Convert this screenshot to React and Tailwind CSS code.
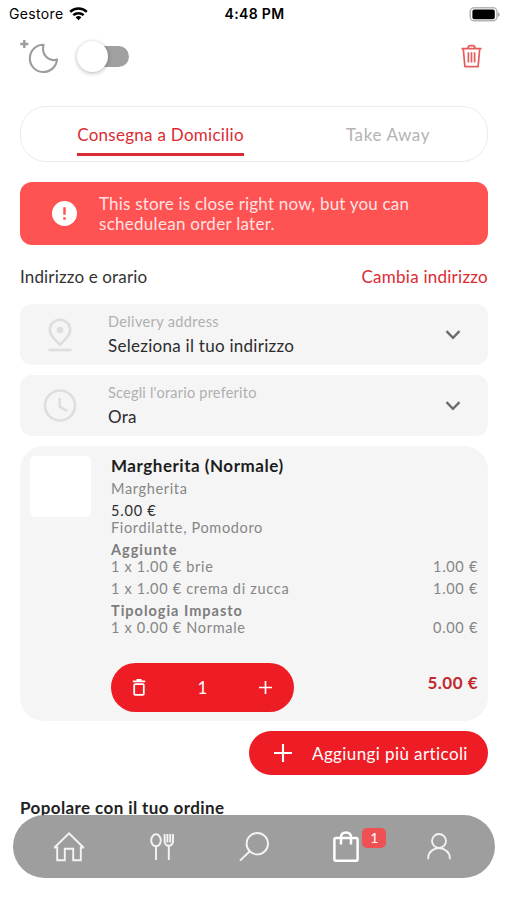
import { useState } from "react";

const EXTRAS = [
  {
    title: "Aggiunte",
    rows: [
      { label: "1 x 1.00 € brie", price: "1.00 €" },
      { label: "1 x 1.00 € crema di zucca", price: "1.00 €" },
    ],
  },
  {
    title: "Tipologia Impasto",
    rows: [{ label: "1 x 0.00 € Normale", price: "0.00 €" }],
  },
];

function StatusBar() {
  return (
    <div className="grid h-7 grid-cols-3 items-center pl-[9px] pr-[7px] font-['Inter',sans-serif] text-black">
      <div className="flex items-center gap-[5px]">
        <span className="text-[14px] leading-none tracking-[0.35px]">Gestore</span>
        <svg width="19" height="14" viewBox="0 0 19 14" fill="none" stroke="#000" strokeWidth="2.5">
          <path d="M1.2 4.9a12 12 0 0 1 16.6 0" />
          <path d="M4.3 8.2a7.6 7.6 0 0 1 10.4 0" />
          <path d="M9.5 13.2 6.6 10.3a4.2 4.2 0 0 1 5.8 0z" fill="#000" stroke="none" />
        </svg>
      </div>
      <span className="text-center text-[14px] font-semibold leading-none tracking-[0.35px]">4:48 PM</span>
      <svg className="justify-self-end" width="31" height="15" viewBox="0 0 31 15">
        <rect x="1.2" y="0.8" width="26.8" height="13" rx="4" fill="#fff" stroke="#b5b5b5" strokeWidth="1.5" />
        <rect x="3.4" y="2.4" width="22.4" height="9.8" rx="2" fill="#000" />
        <path d="M29 5.2c2.2.9 2.2 3.7 0 4.6z" fill="#a5a5a5" />
      </svg>
    </div>
  );
}

function Toolbar() {
  return (
    <div className="flex h-[56px] items-center justify-between pl-5 pr-[25px]">
      <div className="flex items-center gap-[18px]">
        <svg width="39" height="36" viewBox="0 0 39 36" fill="none" stroke="#9c9c9c">
          <path d="M4.3 2v8M.3 6h8" strokeWidth="2.4" />
          <path
            d="M23.6 6.800A13.600 13.600 0 1 0 37 21.400C28.500 24.300 20.800 16 23.600 6.800z"
            strokeWidth="2.1"
            strokeLinejoin="round"
          />
        </svg>
        <button className="flex h-[31px] w-[52px] items-center justify-end">
          <span className="flex h-[21px] w-[46px] items-center rounded-full bg-[#a0a0a0]">
            <span className="-ml-[6px] size-[31px] shrink-0 rounded-full bg-white shadow-[0_1px_4px_rgba(0,0,0,0.3)]" />
          </span>
        </button>
      </div>
      <svg width="21" height="24" viewBox="0 0 21 24" fill="none" stroke="#e65c5c" strokeWidth="1.7">
        <path d="M.5 4.600h20M2.300 4.800l1.600 17.900h13.200l1.600-17.900" strokeLinejoin="round" />
        <path d="M7 4.300c0-1.800 1-2.700 2.300-2.700h2.400c1.300 0 2.300.9 2.300 2.700" />
        <path d="M7.400 8.300v10.200M10.500 8.300v10.200M13.600 8.300v10.200" />
      </svg>
    </div>
  );
}

function Tabs() {
  const [tab, setTab] = useState("delivery");
  const on = "border-[#dc2a33] text-[#dc2a33]";
  const off = "border-transparent text-[#b3b3b3]";
  return (
    <div className="flex h-[56px] items-start rounded-[26px] border border-[#ececec] pl-[56px]">
      <button
        onClick={() => setTab("delivery")}
        className={`h-[49px] w-[167px] whitespace-nowrap border-b-[3px] text-[17px] tracking-[0.28px] ${tab === "delivery" ? on : off}`}
      >
        <span className="block pt-[10px]">Consegna a Domicilio</span>
      </button>
      <button
        onClick={() => setTab("takeaway")}
        className={`ml-[101px] h-[49px] w-[86px] whitespace-nowrap border-b-[3px] text-[17px] tracking-[0.6px] ${tab === "takeaway" ? on : off}`}
      >
        <span className="block pt-[10px]">Take Away</span>
      </button>
    </div>
  );
}

function Chevron() {
  return (
    <svg className="mr-[27px]" width="16" height="10" viewBox="0 0 16 10" fill="none" stroke="#6c6c6c" strokeWidth="2.4">
      <path d="m1.5 1.2 6.5 6.6 6.5-6.6" />
    </svg>
  );
}

function SelectRow({ icon, label, value, labelClass, valueClass }) {
  return (
    <button className="flex h-[61px] w-full items-center rounded-xl bg-[#f5f5f5] text-left">
      <span className="flex w-[79px] shrink-0 justify-center">{icon}</span>
      <span className="ml-[9px] flex flex-1 flex-col whitespace-nowrap pb-[2px]">
        <span className={`text-[14.5px] leading-6 text-[#b0b0b0] ${labelClass}`}>{label}</span>
        <span className={`text-[17px] leading-6 text-[#2c2c2c] ${valueClass}`}>{value}</span>
      </span>
      <Chevron />
    </button>
  );
}

function PinIcon() {
  return (
    <svg width="26" height="34" viewBox="0 0 26 34" fill="none" stroke="#dedede" strokeWidth="2.6">
      <path d="M13 26.800C8.200 22 2.800 17.300 2.800 11.900a10.200 10.200 0 0 1 20.400 0c0 5.400-5.400 10.100-10.200 14.900z" />
      <circle cx="13" cy="12" r="3.300" fill="#dedede" stroke="none" />
      <path d="M1.500 32h23" />
    </svg>
  );
}

function ClockIcon() {
  return (
    <svg width="34" height="34" viewBox="0 0 34 34" fill="none" stroke="#dedede" strokeWidth="2.6">
      <circle cx="17" cy="16.500" r="15" />
      <path d="M16.700 9v8.700l7.600 4.500" />
    </svg>
  );
}

function CartItem() {
  const [qty, setQty] = useState(1);
  return (
    <div className="flex h-[275px] rounded-[24px] bg-[#f5f5f5] px-[10px] pb-[9px] pt-[10px]">
      <div className="size-[61px] shrink-0 rounded-[5px] bg-white" />
      <div className="ml-5 flex flex-1 flex-col whitespace-nowrap text-[14.5px] leading-[17px] text-[#868686]">
        <h3 className="h-[22px] text-[17px] font-bold leading-5 tracking-[0.52px] text-[#1d1d1d]">Margherita (Normale)</h3>
        <span className="h-[22px] leading-[22px] tracking-[0.65px]">Margherita</span>
        <span className="h-[19px] leading-[21px] tracking-[0.8px] text-[#2e2e2e]">5.00 €</span>
        <span className="tracking-[0.65px]">Fiordilatte, Pomodoro</span>
        {EXTRAS.map((group) => (
          <div key={group.title} className="mt-[5px]">
            <p className="font-bold tracking-[1px] text-[#7d7d7d]">{group.title}</p>
            <div className="flex flex-col gap-[5px]">
              {group.rows.map((row) => (
                <div key={row.label} className="flex justify-between tracking-[0.7px]">
                  <span>{row.label}</span>
                  <span>{row.price}</span>
                </div>
              ))}
            </div>
          </div>
        ))}
        <div className="mt-auto flex justify-between">
          <div className="flex h-[49px] w-[183px] items-center justify-between rounded-full bg-[#ee1c25] pl-[21px] pr-[22px] text-white">
            <button onClick={() => setQty(Math.max(0, qty - 1))}>
              <svg width="14" height="17" viewBox="0 0 14 17" fill="none" stroke="#fff" strokeWidth="1.8">
                <path d="M.8 2.400h12.400M4.500 1h5" />
                <rect x="2.200" y="5.200" width="9.600" height="10.600" rx="1" />
              </svg>
            </button>
            <span className="text-[17px]">{qty}</span>
            <button onClick={() => setQty(qty + 1)}>
              <svg width="13" height="13" viewBox="0 0 13 13" stroke="#fff" strokeWidth="1.700">
                <path d="M6.500 0v13M0 6.500h13" />
              </svg>
            </button>
          </div>
          <span className="pt-[11px] text-[17px] font-bold tracking-[0.5px] text-[#c2282d]">5.00 €</span>
        </div>
      </div>
    </div>
  );
}

function BottomNav() {
  return (
    <nav className="absolute left-[13px] top-[815px] flex h-[63px] w-[482px] items-center rounded-full bg-[#9e9e9e] pl-[10px] pr-[10px]">
      <a className="flex flex-1 justify-center">
        <svg width="32" height="30" viewBox="0 0 32 30" fill="none" stroke="#f4f4f4" strokeWidth="1.900">
          <path d="M1.300 15.700 16 1.400l14.700 14.300M1 15.500h4.200M31 15.500h-4.200M4.200 14.800v13.500h7.600V16.800h8.400v11.500h7.600V14.800" />
        </svg>
      </a>
      <a className="flex flex-1 justify-center">
        <svg width="24" height="28" viewBox="0 0 24 28" fill="none" stroke="#f4f4f4" strokeWidth="1.900">
          <ellipse cx="6" cy="7.300" rx="4.800" ry="6" />
          <path d="M6 13.500V27M18.800 12.500V27M14.600 1v7.500a4.200 4.200 0 0 0 8.400 0V1M17.400 1v8.500M20.200 1v8.500" />
        </svg>
      </a>
      <a className="flex flex-1 justify-center">
        <svg width="30" height="30" viewBox="0 0 30 30" fill="none" stroke="#f4f4f4" strokeWidth="1.900">
          <circle cx="18.300" cy="11.700" r="10.700" />
          <path d="M10.700 19.300 1 28.600" />
        </svg>
      </a>
      <a className="flex flex-1 justify-center">
        <span className="relative">
          <svg width="26" height="32" viewBox="0 0 26 32" fill="none" stroke="#fff" strokeWidth="2.500">
            <rect x="1.400" y="7" width="23.200" height="22.800" rx="1.500" />
            <path d="M8 13.500V6.300C8 3.300 10 1.400 13 1.400s5 1.900 5 4.900v7.200" />
          </svg>
          <span className="absolute -top-[3px] left-[29px] flex h-5 w-6 items-center justify-center rounded-[5px] bg-[#ee5053] text-[14px] leading-none text-white">
            1
          </span>
        </span>
      </a>
      <a className="flex flex-1 justify-center">
        <svg width="24" height="27" viewBox="0 0 24 27" fill="none" stroke="#f4f4f4" strokeWidth="1.800">
          <circle cx="12" cy="8" r="7" />
          <path d="M1.200 26.200v-1.400a10.800 9.600 0 0 1 21.600 0v1.400" />
        </svg>
      </a>
    </nav>
  );
}

export default function App() {
  return (
    <div className="relative h-[900px] w-[507px] overflow-hidden bg-white font-['Lato',sans-serif]">
      <StatusBar />
      <Toolbar />
      <main className="flex flex-col pl-5 pr-[19px] pt-[22px]">
        <Tabs />

        {/* Closed store notice */}
        <div className="mt-5 flex h-[63px] items-center rounded-xl bg-[#ff5252] pl-[32px] text-[#ffe3e3]">
          <svg width="25" height="25" viewBox="0 0 25 25">
            <circle cx="12.500" cy="12.500" r="12.500" fill="#fff" />
            <path d="M12.500 6.300v7.400M12.500 16.200v2.500" stroke="#ff5252" strokeWidth="2.500" />
          </svg>
          <p className="ml-[22px] whitespace-nowrap text-[17px] leading-5 tracking-[0.2px]">
            This store is close right now, but you can
            <br />
            <span className="tracking-[0.28px]">schedulean order later.</span>
          </p>
        </div>

        <div className="mt-[19px] flex h-[25px] items-center justify-between whitespace-nowrap text-[17px]">
          <h2 className="tracking-[0.15px] text-[#333]">Indirizzo e orario</h2>
          <a className="tracking-[0.25px] text-[#dc2a33]">Cambia indirizzo</a>
        </div>

        <div className="mt-[15px] flex flex-col gap-[10px]">
          <SelectRow
            icon={<PinIcon />}
            label="Delivery address"
            value="Seleziona il tuo indirizzo"
            labelClass="tracking-[0.36px]"
            valueClass="tracking-[0.27px]"
          />
          <SelectRow
            icon={<ClockIcon />}
            label="Scegli l'orario preferito"
            value="Ora"
            labelClass="tracking-[0.22px]"
            valueClass="tracking-[0.2px]"
          />
          <CartItem />
        </div>

        <button className="mt-[10px] flex h-[44px] w-[239px] items-center self-end whitespace-nowrap rounded-full bg-[#ee1c25] pl-[25px] text-[17px] tracking-[0.4px] text-white">
          <svg width="18" height="18" viewBox="0 0 18 18" stroke="#fff" strokeWidth="2.100">
            <path d="M9 0v18M0 9h18" />
          </svg>
          <span className="ml-5 pt-[2px]">Aggiungi più articoli</span>
        </button>

        <h2 className="mt-[21px] text-[17px] font-bold leading-6 tracking-[0.4px] text-[#222]">Popolare con il tuo ordine</h2>
      </main>
      <BottomNav />
    </div>
  );
}
